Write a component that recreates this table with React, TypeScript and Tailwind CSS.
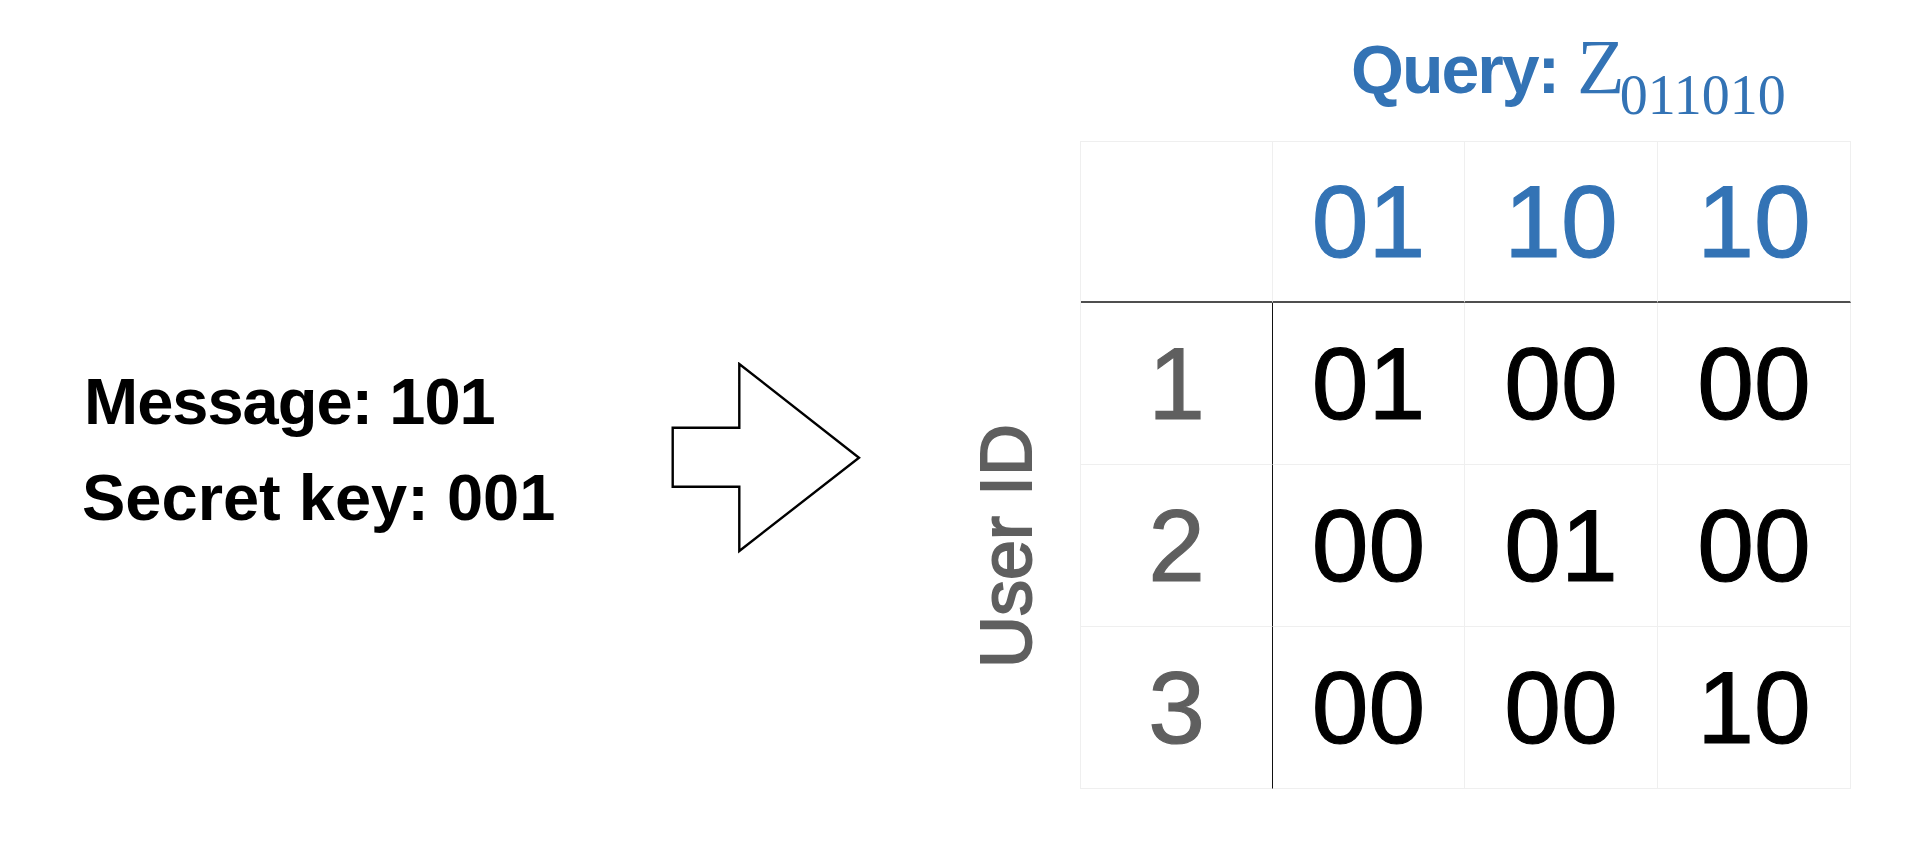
const HEADER = ["01", "10", "10"];

const ROWS = [
	{ id: "1", cells: ["01", "00", "00"] },
	{ id: "2", cells: ["00", "01", "00"] },
	{ id: "3", cells: ["00", "00", "10"] },
];

const COL_W = ["w-[192px]", "w-[192px]", "w-[193px]", "w-[193px]"];

function Arrow() {
	return (
		<svg
			width="192"
			height="192"
			viewBox="0 0 192 192"
			className="ml-[68px] mt-[362px] shrink-0"
		>
			<polygon
				points="2.7,65.7 69.3,65.7 69.3,2 189,95.7 69.3,189 69.3,124.7 2.7,124.7"
				fill="white"
				stroke="black"
				strokeWidth="2.4"
				strokeLinejoin="miter"
			/>
		</svg>
	);
}

function Cell({
	col,
	header,
	children,
	className = "",
}: {
	col: number;
	header?: boolean;
	children?: React.ReactNode;
	className?: string;
}) {
	return (
		<div
			className={`${COL_W[col]} ${
				header ? "h-[161px] border-b-2 border-b-[#4f4f4f]" : "h-[162px] border-b border-b-[#efefef]"
			} border-r border-r-[#efefef] flex items-center justify-center text-[102px] leading-none [-webkit-text-stroke-width:1.2px] ${className}`}
		>
			{children}
		</div>
	);
}

function Matrix() {
	return (
		<div className="flex flex-col border-l border-t border-[#efefef]">
			<div className="flex">
				<Cell col={0} header />
				{HEADER.map((h, i) => (
					<Cell key={i} col={i + 1} header className="text-[#3373b5]">
						{h}
					</Cell>
				))}
			</div>
			{ROWS.map((r) => (
				<div key={r.id} className="flex">
					<Cell col={0} className="text-[#5f5f5f] !border-r-[#111]">
						{r.id}
					</Cell>
					{r.cells.map((c, i) => (
						<Cell key={i} col={i + 1} className="text-black">
							{c}
						</Cell>
					))}
				</div>
			))}
		</div>
	);
}

export default function App() {
	return (
		<div className="w-[1920px] h-[841px] bg-white flex items-start overflow-hidden font-['Liberation_Sans',Arial,sans-serif]">
			<div className="ml-[82px] mt-[354px] w-[520px] shrink-0 font-bold text-[65px] leading-[96px] text-black">
				<div className="pl-[2px] tracking-[-1px]">Message: 101</div>
				<div>Secret key: 001</div>
			</div>

			<Arrow />

			<div className="ml-[108px] flex items-start">
				<div className="w-[72px] shrink-0 flex flex-col">
					<div className="h-[303px]" />
					<div className="h-[486px] flex items-center justify-center">
						<span className="[writing-mode:vertical-rl] rotate-180 text-[72px] leading-[72px] text-[#5f5f5f] whitespace-nowrap [-webkit-text-stroke:2px_#5f5f5f]">
							User ID
						</span>
					</div>
				</div>

				<div className="ml-[38px] flex flex-col">
					<div className="h-[141px] pt-[19px] pl-[271px] leading-[100px] text-[68px] text-[#3373b5] whitespace-nowrap">
						<span className="font-bold tracking-[-2px]">Query:</span>{" "}
						<span className="font-['Liberation_Serif','Times_New_Roman',serif] text-[78px] leading-none">
							Z
						</span>
						<span className="font-['Liberation_Serif','Times_New_Roman',serif] text-[56px] leading-none align-[-21px] ml-[-5px]">
							011010
						</span>
					</div>
					<Matrix />
				</div>
			</div>
		</div>
	);
}
